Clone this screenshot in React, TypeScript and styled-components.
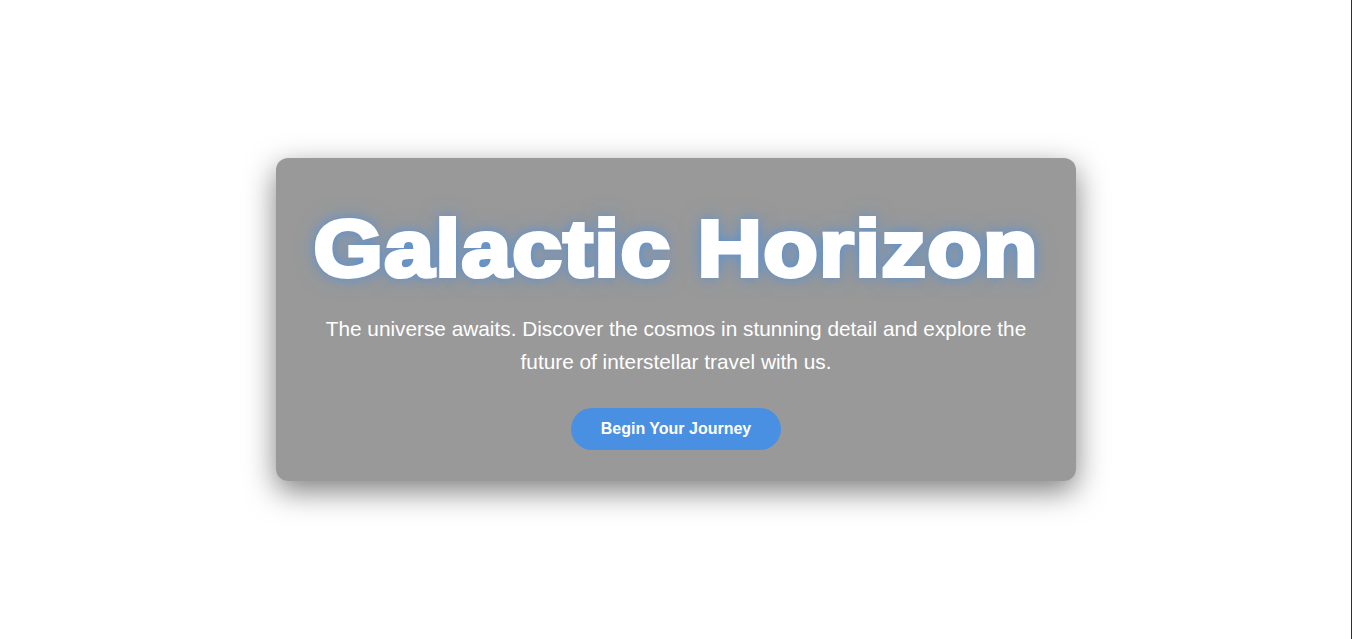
import React from "react";
import styled, { createGlobalStyle } from "styled-components";

const GlobalStyle = createGlobalStyle`
  html, body {
    margin: 0;
    padding: 0;
    background: #ffffff;
    font-family: "Liberation Sans", Arial, sans-serif;
  }
  body::after {
    content: "";
    position: fixed;
    top: 0;
    right: 0;
    bottom: 0;
    width: 1px;
    background: #2e2e2e;
  }
`;

const Page = styled.main`
  min-height: 100vh;
  display: flex;
  align-items: center;
  justify-content: center;
`;

const Card = styled.section`
  box-sizing: border-box;
  width: 800px;
  padding: 30px 40px 31px;
  background: rgba(0, 0, 0, 0.4);
  border-radius: 12px;
  box-shadow: 0 10px 30px rgba(0, 0, 0, 0.5);
  display: flex;
  flex-direction: column;
  align-items: center;
  text-align: center;
  color: #ffffff;
`;

const Title = styled.h1`
  margin: 0 0 2px;
  padding-top: 1px;
  font-family: "Liberation Sans", Arial, sans-serif;
  font-size: 80px;
  font-weight: 700;
  line-height: 120.8px;
  letter-spacing: 1.2px;
  white-space: nowrap;
  color: #ffffff;
  -webkit-text-stroke: 4px #ffffff;
  text-shadow: 0 0 10px #4a90e2, 0 0 20px rgba(74, 144, 226, 0.55);
  transform: scaleX(1.115);
`;

const Lead = styled.p`
  margin: 0 0 30px;
  font-size: 20.8px;
  line-height: 1.6;
  color: #ffffff;
`;

const CTA = styled.button`
  border: none;
  border-radius: 50px;
  padding: 12px 30px;
  background: #4a90e2;
  color: #ffffff;
  font-family: "Liberation Sans", Arial, sans-serif;
  font-size: 16px;
  font-weight: 700;
  line-height: normal;
  cursor: pointer;
`;

export default function App() {
  return (
    <>
      <GlobalStyle />
      <Page>
        <Card>
          <Title>Galactic Horizon</Title>
          <Lead>
            The universe awaits. Discover the cosmos in stunning detail and
            explore the future of interstellar travel with us.
          </Lead>
          <CTA>Begin Your Journey</CTA>
        </Card>
      </Page>
    </>
  );
}
